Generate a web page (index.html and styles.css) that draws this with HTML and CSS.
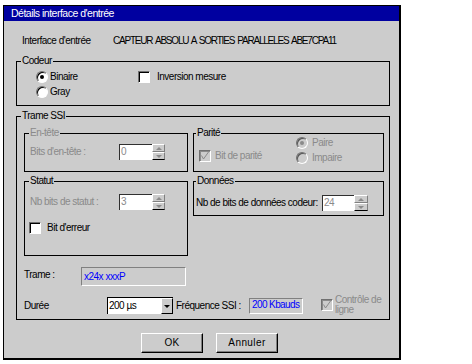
FILE: index.html
```html
<!DOCTYPE html>
<html>
<head>
<meta charset="utf-8">
<title>Détails interface d'entrée</title>
<link rel="stylesheet" href="styles.css">
</head>
<body>
<div class="dialog">
  <div class="titlebar">Détails interface d'entrée</div>
  <div class="body">
    <div class="info-row">
      <span class="info-label">Interface d'entrée</span>
      <span class="info-value">CAPTEUR ABSOLU A SORTIES PARALLELES ABE7CPA11</span>
    </div>

    <fieldset class="codeur">
      <legend>Codeur</legend>
      <div class="codeur-content">
        <div class="radio-col">
          <div class="opt"><span class="radio on"></span><span>Binaire</span></div>
          <div class="opt"><span class="radio"></span><span>Gray</span></div>
        </div>
        <div class="opt inv"><span class="check"></span><span>Inversion mesure</span></div>
      </div>
    </fieldset>

    <fieldset class="trame">
      <legend>Trame SSI</legend>
      <div class="trame-inner">
        <div class="subgrid">
          <fieldset class="sub entete">
            <legend class="dis">En-tête</legend>
            <div class="spin-row">
              <span class="field-label dis">Bits d'en-tête :</span>
              <span class="spin">
                <span class="spin-field">0</span>
                <span class="spin-btns"><span class="sb up"></span><span class="sb down"></span></span>
              </span>
            </div>
          </fieldset>

          <fieldset class="sub parite right">
            <legend>Parité</legend>
            <div class="parite-content">
              <div class="opt parite-check"><span class="check disabled"><svg width="10" height="10" viewBox="0 0 10 10"><polyline points="1.5,4.5 3.5,8 8.5,1" fill="none" stroke="#8a8a8a" stroke-width="1"/></svg></span><span class="dis">Bit de parité</span></div>
              <div class="radio-col2">
                <div class="opt"><span class="radio disabled on"></span><span class="dis">Paire</span></div>
                <div class="opt"><span class="radio disabled"></span><span class="dis">Impaire</span></div>
              </div>
            </div>
          </fieldset>

          <fieldset class="sub statut">
            <legend>Statut</legend>
            <div class="spin-row">
              <span class="field-label dis">Nb bits de statut :</span>
              <span class="spin">
                <span class="spin-field">3</span>
                <span class="spin-btns"><span class="sb up"></span><span class="sb down"></span></span>
              </span>
            </div>
            <div class="opt erreur"><span class="check"></span><span>Bit d'erreur</span></div>
          </fieldset>

          <fieldset class="sub donnees right">
            <legend>Données</legend>
            <div class="spin-row">
              <span class="field-label">Nb de bits de données codeur:</span>
              <span class="spin wide">
                <span class="spin-field">24</span>
                <span class="spin-btns"><span class="sb up"></span><span class="sb down"></span></span>
              </span>
            </div>
          </fieldset>
        </div>

        <div class="trame-row">
          <span class="lbl">Trame :</span>
          <span class="sunken trame-field">x24x xxxP</span>
        </div>

        <div class="duree-row">
          <span class="lbl duree-lbl">Durée</span>
          <span class="combo">
            <span class="combo-text">200 µs</span>
            <span class="combo-btn"></span>
          </span>
          <span class="lbl freq-lbl">Fréquence SSI :</span>
          <span class="sunken freq-field">200 Kbauds</span>
          <span class="check disabled ctrl"><svg width="10" height="10" viewBox="0 0 10 10"><polyline points="1.5,4.5 3.5,8 8.5,1" fill="none" stroke="#8a8a8a" stroke-width="1"/></svg></span>
          <span class="ctrl-lbl dis">Contrôle de<br>ligne</span>
        </div>
      </div>
    </fieldset>

    <div class="buttons">
      <div class="btn">OK</div>
      <div class="btn">Annuler</div>
    </div>
  </div>
</div>
</body>
</html>
```

FILE: styles.css
```css
* { box-sizing: border-box; }
html, body { margin: 0; padding: 0; background: #fff; }
body {
  font-family: "Liberation Sans", Arial, sans-serif;
  font-size: 10px;
  letter-spacing: -0.5px;
  line-height: 12px;
  color: #000;
}
.dis { color: #8a8a8a; }

.dialog {
  margin: 5px 0 0 3px;
  width: 398px;
  height: 355px;
  border: 1px solid #000;
  border-right-width: 2px;
  border-bottom-width: 2px;
  background: #cccccc;
  display: flex;
  flex-direction: column;
}
.titlebar {
  height: 15px;
  background: #0000a0;
  color: #fff;
  font-size: 10.5px;
  letter-spacing: -0.5px;
  line-height: 15px;
  padding-left: 7px;
}
.body {
  padding-left: 12px;
  display: flex;
  flex-direction: column;
}
.info-row {
  margin-top: 14px;
  margin-left: 6px;
  display: flex;
  height: 12px;
  white-space: nowrap;
}
.info-label { width: 91px; }
.info-value { letter-spacing: -1.2px; word-spacing: 1.5px; }

fieldset {
  margin: 0;
  padding: 0;
  border: 1px solid #000;
  min-width: 0;
}
legend {
  padding: 0 1px;
  margin-left: 4px;
  line-height: 12px;
  height: 12px;
}
.right > legend { margin-left: 2px; }

.codeur { margin-top: 8px; width: 374px; height: 51px; }
.codeur-content { display: flex; padding: 2px 0 0 19px; }
.radio-col { display: flex; flex-direction: column; width: 102px; }
.opt { display: flex; align-items: center; height: 15px; gap: 2px; white-space: nowrap; }
.inv { gap: 7px; }

.radio {
  width: 12px;
  height: 12px;
  border-radius: 50%;
  border: 1px solid;
  border-color: #707070 #ffffff #ffffff #707070;
  box-shadow: inset 1px 1px 0 #000;
  background: #fff;
  position: relative;
  flex: none;
}
.radio.on::after {
  content: "";
  position: absolute;
  left: 3px;
  top: 3px;
  width: 4px;
  height: 4px;
  border-radius: 50%;
  background: #000;
}
.radio.disabled { background: #cccccc; box-shadow: inset 1px 1px 0 #555; }
.radio.disabled.on::after { background: #8a8a8a; }

.check {
  width: 12px;
  height: 12px;
  border: 1px solid;
  border-color: #707070 #ffffff #ffffff #707070;
  box-shadow: inset 1px 1px 0 #000;
  background: #fff;
  flex: none;
  display: flex;
  align-items: center;
  justify-content: center;
}
.check.disabled { background: #cccccc; box-shadow: inset 1px 1px 0 #8a8a8a; }

.trame { margin-top: 4px; width: 374px; height: 210px; }
.trame-inner { padding: 0 5px 0 7px; display: flex; flex-direction: column; }
.subgrid {
  margin-top: 5px;
  display: grid;
  grid-template-columns: 164px 191px;
  column-gap: 5px;
  row-gap: 3px;
  align-items: start;
}
.entete, .parite { height: 45px; }
.statut { height: 81px; }
.donnees { height: 41px; }

.spin-row { display: flex; align-items: center; height: 16px; white-space: nowrap; }
.entete .spin-row { margin: 5px 0 0 5px; }
.statut .spin-row { margin: 7px 0 0 5px; }
.donnees .spin-row { margin: 8px 0 0 2px; }
.field-label { width: 89px; }
.donnees .field-label { width: 126px; }

.spin { display: flex; height: 16px; }
.spin-field {
  width: 33px;
  height: 16px;
  background: #fff;
  border-left: 1px solid #303030;
  border-top: 1px solid #303030;
  color: #8a8a8a;
  padding-left: 1px;
  line-height: 14px;
}
.spin.wide .spin-field { width: 32px; }
.spin-btns { display: flex; flex-direction: column; width: 13px; }
.spin.wide .spin-btns { width: 14px; }
.sb {
  height: 8px;
  background: #cccccc;
  border: 1px solid;
  border-color: #ffffff #808080 #808080 #ffffff;
  display: flex;
  align-items: center;
  justify-content: center;
}
.sb.down { border-bottom-color: #000; }
.sb.up::after {
  content: "";
  border-left: 3px solid transparent;
  border-right: 3px solid transparent;
  border-bottom: 3px solid #8a8a8a;
}
.sb.down::after {
  content: "";
  border-left: 3px solid transparent;
  border-right: 3px solid transparent;
  border-top: 3px solid #8a8a8a;
}

.parite-content { display: flex; align-items: flex-start; padding-left: 5px; }
.parite-check { width: 97px; gap: 4px; margin-top: 9px; }
.radio-col2 { display: flex; flex-direction: column; margin-top: -4px; }
.radio-col2 .opt { gap: 4px; }

.erreur { margin: 10px 0 0 4px; gap: 6px; }

.trame-row { display: flex; margin-top: 11px; }
.trame-row .lbl { width: 57px; margin-top: 2px; }
.sunken {
  border: 1px solid;
  border-color: #808080 #ffffff #ffffff #808080;
  color: #0000ff;
  padding-left: 2px;
  white-space: nowrap;
}
.trame-field { width: 105px; height: 19px; line-height: 17px; }

.duree-row { display: flex; align-items: flex-start; margin-top: 11px; height: 17px; white-space: nowrap; }
.duree-lbl { width: 83px; margin-top: 3px; }
.combo {
  display: flex;
  width: 66px;
  height: 17px;
  background: #fff;
  border-left: 1px solid #000;
  border-top: 1px solid #000;
}
.combo-text { flex: 1; padding-left: 1px; line-height: 15px; }
.combo-btn {
  width: 12px;
  height: 16px;
  background: #cccccc;
  border: 1px solid;
  border-color: #ffffff #000 #000 #ffffff;
  display: flex;
  align-items: center;
  justify-content: center;
}
.combo-btn::after {
  content: "";
  border-left: 3px solid transparent;
  border-right: 3px solid transparent;
  border-top: 3px solid #000;
}
.freq-lbl { margin-left: 3px; width: 73px; margin-top: 3px; }
.freq-field { width: 54px; height: 16px; margin-top: 1px; line-height: 12px; letter-spacing: -0.6px; }
.ctrl { margin-left: 18px; margin-top: 2px; }
.ctrl-lbl { margin-left: 2px; margin-top: -2px; line-height: 10px; }

.buttons { display: flex; gap: 13px; margin-top: 13px; padding-left: 125px; }
.btn {
  width: 62px;
  height: 20px;
  border: 1px solid;
  border-color: #ffffff #000 #000 #ffffff;
  box-shadow: inset -1px -1px 0 #808080;
  text-align: center;
  line-height: 18px;
  letter-spacing: 0.4px;
}
```
